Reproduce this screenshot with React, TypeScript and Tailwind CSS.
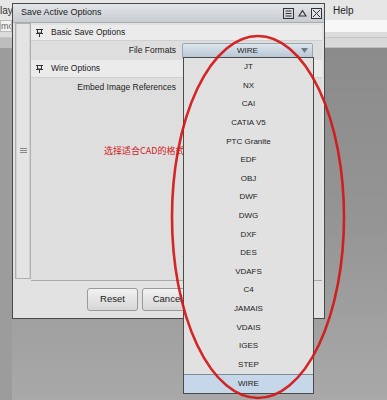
import React from "react";

const items = [
  "JT", "NX", "CAI", "CATIA V5", "PTC Granite", "EDF", "OBJ", "DWF", "DWG", "DXF",
  "DES", "VDAFS", "C4", "JAMAIS", "VDAIS", "IGES", "STEP", "WIRE",
];

function Pin() {
  return (
    <svg width="9" height="9" viewBox="0 0 9 9" className="shrink-0">
      <path d="M1 1.5H8" stroke="#333" strokeWidth="1" />
      <path d="M2.5 2V5H6.5V2" stroke="#333" strokeWidth="1" fill="none" />
      <path d="M1 5.5H8" stroke="#333" strokeWidth="1" />
      <path d="M4.5 5.5V9" stroke="#333" strokeWidth="1" />
    </svg>
  );
}

export default function App() {
  return (
    <div
      className="relative w-[387px] h-[400px] overflow-hidden text-[#222]"
      style={{ fontFamily: '"Liberation Sans", "Noto Sans CJK SC", sans-serif' }}
    >
      {/* background application */}
      <div className="flex flex-col h-full bg-gradient-to-b from-[#9a9a9a] to-[#a6a6a6]">
        <div className="h-[20px] bg-[#e6e6e6] flex items-center text-[10px]">
          <span className="w-[12px] overflow-hidden whitespace-nowrap text-[#333]">lay</span>
          <span className="ml-[321px] text-[#222]">Help</span>
        </div>
        <div className="h-[12px] flex">
          <div className="w-[12px] bg-[#f2f2f2] border border-[#bbb] text-[9px] leading-[10px] text-[#666] overflow-hidden whitespace-nowrap">mou</div>
          <div className="flex-1 bg-[#f7f7f7]" />
        </div>
        <div className="h-[6px] bg-[#dcdcdc] border-b border-[#c4c4c4]" />
        <div className="h-[10px] flex">
          <div className="w-[12px] bg-[#bdbdbd]" />
          <div className="flex-1 bg-[#d9d9d9] border-b border-[#bdbdbd]" />
        </div>
        <div className="flex-1 flex">
          <div className="w-[12px] bg-[#9c9c9c]" />
          <div className="flex-1 bg-gradient-to-b from-[#8b8b8b] via-[#959595] to-[#a9a9a9]" />
        </div>
      </div>

      {/* dialog window */}
      <div className="absolute left-[12px] top-[3px] w-[313px] h-[316px] border border-[#4a4a4a] bg-[#e2e2e2] flex flex-col">
        <div className="h-[19px] bg-gradient-to-b from-[#e3e6e9] to-[#c7ccd1] flex items-center justify-between border-b border-[#a9adb1]">
          <span className="pl-[8px] text-[9px] text-[#222]">Save Active Options</span>
          <div className="flex items-center gap-[4px] pr-[2px]">
            <svg width="11" height="11" viewBox="0 0 11 11">
              <rect x="0.5" y="0.5" width="10" height="10" fill="none" stroke="#333" />
              <path d="M2.5 3H8.5M2.5 5.5H8.5M2.5 8H8.5" stroke="#333" />
            </svg>
            <svg width="9" height="8" viewBox="0 0 9 8">
              <path d="M1 7H8L4.5 1.5Z" fill="none" stroke="#333" strokeWidth="1.2" />
            </svg>
            <svg width="11" height="11" viewBox="0 0 11 11">
              <rect x="0.5" y="0.5" width="10" height="10" fill="#dde1e5" stroke="#333" />
              <path d="M2 2L9 9M9 2L2 9" stroke="#333" />
            </svg>
          </div>
        </div>
        <div className="flex h-[258px]">
          <div className="ml-[2px] w-[16px] h-[256px] bg-[#d2d2d2] border border-[#b0b0b0] flex items-center justify-center">
            <div className="w-[12px] h-full bg-[#e4e4e4] flex items-center justify-center">
              <div className="flex flex-col gap-[1px] mb-[2px]">
                <div className="w-[7px] h-[1px] bg-[#888]" />
                <div className="w-[7px] h-[1px] bg-[#888]" />
                <div className="w-[7px] h-[1px] bg-[#888]" />
              </div>
            </div>
          </div>
          <div className="flex-1 flex flex-col pt-[2px] pr-[2px] relative">
            <div className="h-[16px] bg-[#ebebeb] flex items-center gap-[7px] pl-[4px] border-b border-[#d0d0d0] text-[8.5px]">
              <Pin />
              <span>Basic Save Options</span>
            </div>
            <div className="h-[19px] flex items-center bg-[#dedede]">
              <span className="w-[146px] text-right text-[8.5px] pr-[1px]">File Formats</span>
              <div className="ml-[5px] w-[131px] h-[15px] rounded-t-[2px] border border-[#9aa6b2] bg-gradient-to-b from-[#dde5ec] to-[#b9c8d6] flex items-center relative">
                <span className="flex-1 text-center text-[8px]">WIRE</span>
                <svg width="7" height="5" viewBox="0 0 7 5" className="absolute right-[4px]">
                  <path d="M0 0H7L3.5 5Z" fill="#6f7a86" />
                </svg>
              </div>
            </div>
            <div className="h-[18px] bg-[#ebebeb] flex items-center gap-[7px] pl-[4px] border-b border-[#d0d0d0] text-[8.5px]">
              <Pin />
              <span>Wire Options</span>
            </div>
            <div className="h-[18px] flex items-center bg-[#dedede]">
              <span className="w-[146px] text-right text-[8.5px] pr-[1px]">Embed Image References</span>
            </div>
            <div className="flex-1 bg-[#dedede] border-b border-[#a8a8a8] pl-[73px] pt-[41px]">
              <span className="text-[9px] text-[#d22020]" style={{ fontFamily: '"Noto Sans CJK SC", sans-serif' }}>
                选择适合CAD的格式
              </span>
            </div>
          </div>
        </div>
        <div className="flex-1 flex items-start pt-[7px] pl-[74px] gap-[4px]">
          <button className="w-[51px] h-[23px] rounded-[3px] border border-[#9a9a9a] bg-gradient-to-b from-[#f2f2f2] to-[#d6d6d6] text-[9.5px] text-[#222]">
            Reset
          </button>
          <button className="w-[51px] h-[23px] rounded-[3px] border border-[#9a9a9a] bg-gradient-to-b from-[#f2f2f2] to-[#d6d6d6] text-[9.5px] text-[#222]">
            Cancel
          </button>
        </div>
      </div>

      {/* dropdown list */}
      <div className="absolute left-[183px] top-[57px] w-[131px] border border-[#4a4a4a] bg-[#e1e1e1] flex flex-col">
        {items.map((it, i) => (
          <div
            key={it}
            className={
              i === items.length - 1
                ? "h-[18.6px] flex items-center justify-center text-[8px] bg-[#c5d7e8] border-t border-[#7f8d99]"
                : "h-[18.6px] flex items-center justify-center text-[8px]"
            }
          >
            {it}
          </div>
        ))}
      </div>

      {/* red annotation ellipse */}
      <svg className="absolute left-0 top-0 pointer-events-none" width="387" height="400" viewBox="0 0 387 400">
        <ellipse cx="258" cy="217" rx="86" ry="181" fill="none" stroke="#d41515" strokeWidth="2.6" opacity="0.92" />
      </svg>
    </div>
  );
}
